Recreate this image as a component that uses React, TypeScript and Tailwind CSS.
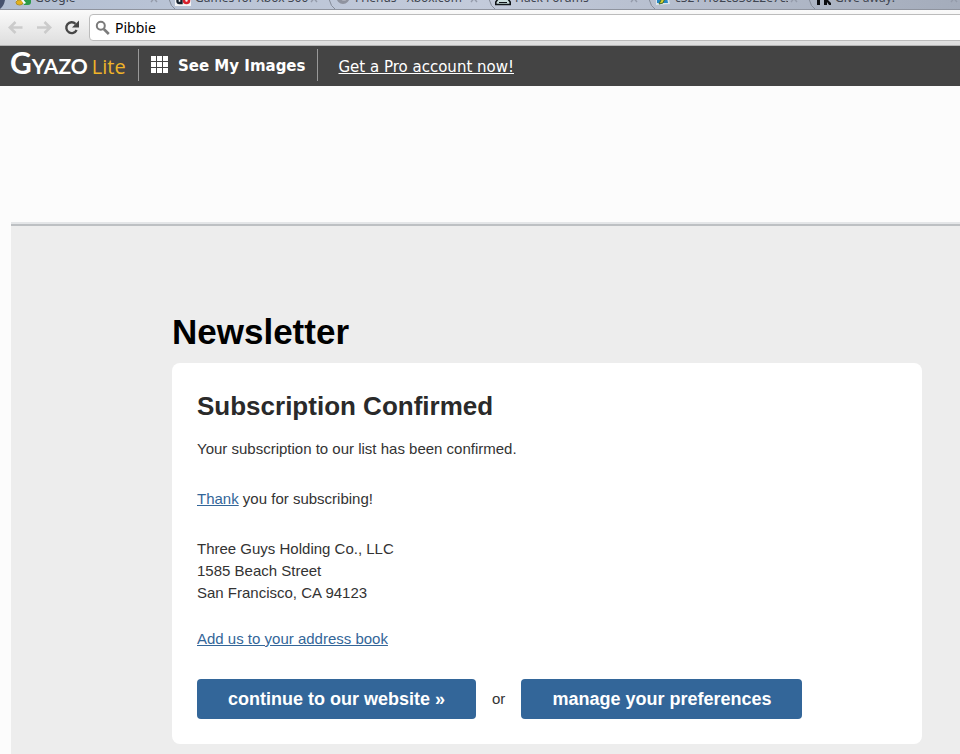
import type { ReactNode } from 'react';

const GoogleIcon = () => (
  <svg viewBox="0 0 16 16" className="w-4 h-4">
    <path d="M1 9q4-3 7 0v4q-4 3-7 0z" fill="#fff" />
    <path d="M7 1h9v11q0 3-3 3H9z" fill="#2b9a48" />
    <ellipse cx="4.500" cy="12.500" rx="3.500" ry="2.500" fill="#e3b21c" stroke="#b08f2c" />
    <path d="M7 8l4 5-2 1-3-4z" fill="#fff" />
  </svg>
);

const GamesIcon = () => (
  <svg viewBox="0 0 16 16" className="w-4 h-4">
    <rect width="16" height="16" fill="#f4f4f6" />
    <path d="M6.500 6v7H4.200a1.600 1.600 0 0 1-1.700-1.700V8" fill="none" stroke="#14202c" strokeWidth="2.400" />
    <circle cx="11.500" cy="10.500" r="2.500" fill="none" stroke="#d9202c" strokeWidth="2.600" />
  </svg>
);

const FriendsIcon = () => (
  <svg viewBox="0 0 16 16" className="w-4 h-4">
    <circle cx="8" cy="7.500" r="6.500" fill="#8f939f" />
    <circle cx="9" cy="6.500" r="4" fill="#c5c8d2" />
  </svg>
);

const ForumIcon = () => (
  <svg viewBox="0 0 16 16" className="w-4 h-4">
    <path d="M3 5h10v4l2.200 3v2.500H.8V12L3 9z" fill="#c9dcdb" stroke="#101418" strokeWidth="1.600" />
    <path d="M4 12.500h8M6 9.500h4" stroke="#101418" />
  </svg>
);

const ImageIcon = () => (
  <svg viewBox="0 0 16 16" className="w-4 h-4">
    <path d="M1 1h11l3 13-14 1z" fill="#dbe6ec" />
    <path d="M2 2h9l2 11H2z" fill="#2487c4" />
    <path d="M4 14l3-6 4-2-3 7z" fill="#d9cf2e" stroke="#3c6b2e" />
  </svg>
);

const GiveawayIcon = () => (
  <svg viewBox="0 0 16 16" className="w-4 h-4">
    <path d="M0 6h6v3H5v6H2V9H0zM9 5h3v4l4 4v2h-2l-2-3v3H9z" fill="#0c0d10" />
  </svg>
);

const tabs: { title: string; icon: ReactNode }[] = [
  { title: 'Google', icon: <GoogleIcon /> },
  { title: 'Games for Xbox 360,', icon: <GamesIcon /> },
  { title: 'Friends - Xbox.com', icon: <FriendsIcon /> },
  { title: 'Hack Forums', icon: <ForumIcon /> },
  { title: 'c3211f02c83022e7c34', icon: <ImageIcon /> },
  { title: 'Give away!', icon: <GiveawayIcon /> },
];

const TabStrip = () => (
  <div className="relative h-[10px] overflow-hidden flex items-end bg-linear-to-r from-[#b3bfd2] via-[#c3cbdb] to-[#a4acbb] border-b border-[#8f949f] font-['Noto_Sans','Open_Sans',sans-serif]">
    <svg viewBox="0 0 8 10" className="absolute left-0 top-0 w-2 h-[10px]" aria-hidden="true">
      <path d="M0 0h5q-1 6-5 9z" fill="#47536e" />
    </svg>
    {tabs.map((tab, i) => (
      <div key={tab.title} className="relative w-40 shrink-0 h-5 pl-[15px] pb-0.5 flex items-center gap-1">
        {i > 0 && (
          <svg viewBox="0 0 10 10" className="absolute left-2 bottom-0 w-[10px] h-[10px]" aria-hidden="true">
            <path d="M1 0q2 8 6 10" fill="none" stroke="#858c99" />
          </svg>
        )}
        <span className="relative shrink-0">{tab.icon}</span>
        <span className="flex-1 overflow-hidden whitespace-nowrap text-xs leading-5 text-[#3f4550]">{tab.title}</span>
        <button type="button" aria-label="Close tab" className="relative w-3 h-4 -ml-1 shrink-0">
          <svg viewBox="0 0 12 16" className="w-3 h-4">
            <path d="M3 5l6 7M9 5l-6 7" stroke="#949baa" strokeWidth="1.400" />
          </svg>
        </button>
      </div>
    ))}
  </div>
);

const Toolbar = () => (
  <div className="h-9 flex items-center bg-linear-to-b from-[#fafafa] to-[#dedede] border-b border-[#b4b4b4] overflow-hidden">
    <div className="flex items-center gap-3 pl-2">
      <button type="button" aria-label="Back" className="w-4 h-4">
        <svg viewBox="0 0 16 16" className="w-4 h-4" fill="none" stroke="#cbcbcb" strokeWidth="2.600">
          <path d="M7.500 2L1.800 7.500l5.700 5.500M2 7.500h12.500" />
        </svg>
      </button>
      <button type="button" aria-label="Forward" className="w-4 h-4">
        <svg viewBox="0 0 16 16" className="w-4 h-4" fill="none" stroke="#cbcbcb" strokeWidth="2.600">
          <path d="M8.500 2l5.700 5.500L8.500 13M14 7.500H1" />
        </svg>
      </button>
      <button type="button" aria-label="Reload" className="w-4 h-4">
        <svg viewBox="0 0 16 16" className="w-4 h-4">
          <path d="M11.500 3.800A5.400 5.400 0 1 0 12.600 10" fill="none" stroke="#474747" strokeWidth="2.400" />
          <path d="M15 .5v7H8z" fill="#474747" />
        </svg>
      </button>
    </div>
    <label className="flex-1 h-[27px] ml-[9px] -mr-2 pl-[5px] flex items-center gap-1 bg-white border border-[#bcbcbc] rounded">
      <svg viewBox="0 0 16 16" className="w-4 h-4" fill="none" stroke="#7b7b7b">
        <circle cx="5.800" cy="5.800" r="4" strokeWidth="2" />
        <path d="M8.800 9l5 5" strokeWidth="2.600" />
      </svg>
      <input
        type="text"
        aria-label="Address"
        defaultValue="Pibbie"
        className="flex-1 min-w-0 bg-transparent outline-none text-sm text-black font-['Noto_Sans','Open_Sans',sans-serif]"
      />
    </label>
  </div>
);

const GyazoBar = () => (
  <header className="h-10 pt-[3px] flex items-start bg-[#444] text-white text-[15px] leading-[34px] font-['DejaVu_Sans',Verdana,sans-serif]">
    <a href="#" className="w-[138px] pl-[10px] flex items-baseline whitespace-nowrap leading-[26px] font-['Lato',sans-serif]">
      <span className="text-[30px] font-bold">G</span>
      <span className="text-[21px] font-bold">YAZO</span>
      <span className="ml-1 text-[20px] text-[#f0b429] font-['Open_Sans',sans-serif]">Lite</span>
    </a>
    <a href="#" className="h-8 px-3 flex items-start gap-[10px] border-x border-[#999] font-bold whitespace-nowrap">
      <svg viewBox="0 0 17 17" className="mt-[7px] w-[17px] h-[17px]" fill="#fff">
        {[0, 6, 12].map((y) => [0, 6, 12].map((x) => <rect key={`${x}-${y}`} x={x} y={y} width="5" height="5" />))}
      </svg>
      See My Images
    </a>
    <a href="#" className="ml-5 underline leading-9 whitespace-nowrap">Get a Pro account now!</a>
  </header>
);

const Newsletter = () => (
  <main className="grow ml-[11px] mt-[136px] border-t-2 border-[#e4e6e8] bg-[#ededed]">
    <div className="border-t-2 border-[#bdc0c3]">
      <div className="pt-[84px] pl-[161px] pr-[38px] pb-[10px]">
        <h1 className="text-[35px] leading-[44px] font-bold text-black">Newsletter</h1>
        <section className="mt-[9px] p-[25px] bg-white rounded-lg text-[15px] leading-[22px] text-[#333]">
          <h2 className="text-[26px] leading-9 font-bold text-[#2a2a2a]">Subscription Confirmed</h2>
          <p className="mt-[14px]">Your subscription to our list has been confirmed.</p>
          <p className="mt-7">
            <a href="#" className="text-[#336699] underline">Thank</a> you for subscribing!
          </p>
          <address className="mt-7 not-italic">
            Three Guys Holding Co., LLC
            <br />
            1585 Beach Street
            <br />
            San Francisco, CA 94123
          </address>
          <p className="mt-6">
            <a href="#" className="text-[#336699] underline">Add us to your address book</a>
          </p>
          <div className="mt-[29px] flex items-center gap-4">
            <button type="button" className="h-10 px-[31px] rounded bg-[#336699] text-white text-[18px] font-bold whitespace-nowrap">
              continue to our website »
            </button>
            <span>or</span>
            <button type="button" className="h-10 px-[31px] rounded bg-[#336699] text-white text-[18px] font-bold whitespace-nowrap">
              manage your preferences
            </button>
          </div>
        </section>
      </div>
    </div>
  </main>
);

export default function App() {
  return (
    <div className="min-h-screen flex flex-col bg-[#fcfcfc] overflow-x-hidden font-['Liberation_Sans',Arial,sans-serif]">
      <TabStrip />
      <Toolbar />
      <GyazoBar />
      <Newsletter />
    </div>
  );
}
